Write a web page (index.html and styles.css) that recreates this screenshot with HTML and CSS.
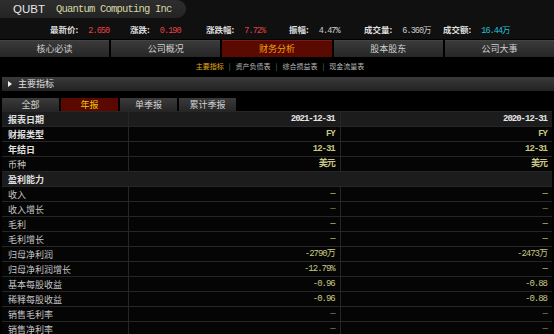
FILE: index.html
```html
<!DOCTYPE html>
<html lang="zh-CN">
<head>
    <meta charset="UTF-8">
    <title>QUBT 财务分析</title>
    <link rel="stylesheet" href="styles.css">
</head>
<body>

    <div class="top">
        <div class="title">
            <span class="code">QUBT</span>
            <span class="name">Quantum Computing Inc</span>
        </div>
        <div class="quote">
            <span class="q"><b>最新价:</b><i class="red">2.650</i></span>
            <span class="q"><b>涨跌:</b><i class="red">0.190</i></span>
            <span class="q"><b>涨跌幅:</b><i class="red">7.72%</i></span>
            <span class="q"><b>振幅:</b><i>4.47%</i></span>
            <span class="q"><b>成交量:</b><i>6.360万</i></span>
            <span class="q"><b>成交额:</b><i class="cyan">16.44万</i></span>
        </div>
    </div>

    <ul class="nav">
        <li>核心必读</li>
        <li>公司概况</li>
        <li class="on">财务分析</li>
        <li>股本股东</li>
        <li>公司大事</li>
    </ul>

    <div class="subnav">
        <a class="on">主要指标</a><span>|</span><a>资产负债表</a><span>|</span><a>综合损益表</a><span>|</span><a>现金流量表</a>
    </div>

    <div class="section"><span class="tri"></span>主要指标</div>

    <ul class="tabs">
        <li>全部</li>
        <li class="on">年报</li>
        <li>单季报</li>
        <li>累计季报</li>
    </ul>

    <table class="data">
        <tr class="head">
            <td>报表日期</td><td>2021-12-31</td><td>2020-12-31</td>
        </tr>
        <tr class="strong">
            <td>财报类型</td><td>FY</td><td>FY</td>
        </tr>
        <tr class="strong">
            <td>年结日</td><td>12-31</td><td>12-31</td>
        </tr>
        <tr class="strong">
            <td class="plain">币种</td><td>美元</td><td>美元</td>
        </tr>
        <tr class="group">
            <td>盈利能力</td><td></td><td></td>
        </tr>
        <tr><td>收入</td><td>—</td><td>—</td></tr>
        <tr class="dim"><td>收入增长</td><td>—</td><td>—</td></tr>
        <tr><td>毛利</td><td>—</td><td>—</td></tr>
        <tr><td>毛利增长</td><td>—</td><td>—</td></tr>
        <tr><td>归母净利润</td><td>-2790万</td><td>-2473万</td></tr>
        <tr><td>归母净利润增长</td><td>-12.79%</td><td>—</td></tr>
        <tr><td>基本每股收益</td><td>-0.96</td><td>-0.88</td></tr>
        <tr><td>稀释每股收益</td><td>-0.96</td><td>-0.88</td></tr>
        <tr class="dim"><td>销售毛利率</td><td>—</td><td>—</td></tr>
        <tr class="dim"><td>销售净利率</td><td>—</td><td>—</td></tr>
    </table>

</body>
</html>
```

FILE: styles.css
```css
body {
    margin: 0;
    background: #000;
    color: #ccc;
    font-family: "Noto Sans CJK SC", sans-serif;
    font-size: 9px;
    overflow: hidden;
}
ul {
    list-style: none;
    margin: 0;
    padding: 0;
}
.top {
    background: #101010;
    height: 39px;
}
.title {
    box-sizing: border-box;
    width: 186px;
    height: 18px;
    padding-left: 13px;
    display: flex;
    align-items: center;
    gap: 11px;
    white-space: nowrap;
    background: linear-gradient(#2e2e2e, #242424);
    border-radius: 0 9px 9px 0;
}
.code {
    color: #e6e6e6;
    font-family: "Liberation Sans", sans-serif;
    font-size: 11.5px;
}
.name {
    color: #d6d6a4;
    font-family: "Liberation Mono", monospace;
    font-size: 10.5px;
    letter-spacing: -0.8px;
}
.quote {
    display: grid;
    grid-template-columns: 80px 76px 83px 75px 79px auto;
    padding: 4px 0 0 50px;
    height: 15px;
    align-items: center;
    white-space: nowrap;
}
.q b {
    color: #ddd;
    font-weight: bold;
    font-size: 8.5px;
    margin-right: 10px;
}
.q i {
    font-style: normal;
    font-family: "Liberation Mono", monospace;
    font-size: 8.5px;
    color: #ccc;
    letter-spacing: -0.9px;
}
.q i.red {
    color: #e84040;
}
.q i.cyan {
    color: #20c0d8;
}
.nav {
    display: flex;
    gap: 2px;
    margin-top: 1px;
}
.nav li {
    flex: 1;
    height: 16px;
    line-height: 16px;
    text-align: center;
    font-size: 9px;
    color: #cfcfcf;
    background: linear-gradient(#3a3a3a, #262626);
    border-top: 1px solid #444;
}
.nav li.on {
    background: #5a0a00;
    border-top-color: #7a1a10;
    color: #f0a010;
}
.subnav {
    text-align: center;
    height: 14px;
    line-height: 14px;
    margin-top: 2px;
    padding-left: 6px;
    font-size: 7px;
    color: #b8b8b8;
}
.subnav span {
    color: #5c9a76;
    margin: 0 5px;
}
.subnav a.on {
    color: #e0a818;
}
.section {
    margin: 4px 0 0 2px;
    height: 14px;
    line-height: 14px;
    padding-left: 16px;
    position: relative;
    background: linear-gradient(#3a3a3a, #222);
    color: #e0e0e0;
}
.tri {
    position: absolute;
    left: 6px;
    top: 4px;
    border-left: 4px solid #eee;
    border-top: 3px solid transparent;
    border-bottom: 3px solid transparent;
}
.tabs {
    display: flex;
    gap: 2px;
    margin: 7px 0 0 2px;
}
.tabs li {
    width: 57px;
    height: 13px;
    line-height: 13px;
    text-align: center;
    color: #d0d0d0;
    background: linear-gradient(#3a3a3a, #262626);
}
.tabs li.on {
    background: #5a0800;
    color: #f0c800;
}
.data {
    margin-left: 2px;
    width: 550px;
    border-collapse: collapse;
    table-layout: fixed;
    background: #050505;
}
.data td {
    height: 14px;
    padding: 0 5px;
    border-top: 1px solid #262626;
    border-bottom: 1px solid #262626;
    color: #c8c884;
    text-align: right;
    font-family: "Liberation Mono", "Noto Sans CJK SC", monospace;
    font-size: 9px;
    letter-spacing: -1px;
    line-height: 13px;
    white-space: nowrap;
}
.data td:first-child {
    width: 115px;
    padding-left: 6px;
    text-align: left;
    color: #c4c4c4;
    font-family: "Noto Sans CJK SC", sans-serif;
    font-size: 9px;
    letter-spacing: 0;
    border-right: 1px solid #262626;
}
.data td:nth-child(2) {
    border-right: 1px solid #262626;
}
.data tr.head td {
    background: #1c1c1c;
    color: #e6e6e6;
    font-weight: bold;
}
.data tr.strong td {
    font-weight: bold;
}
.data tr.strong td:first-child,
.data tr.head td:first-child {
    color: #e0e0e0;
}
.data tr.strong td.plain {
    font-weight: normal;
    color: #c4c4c4;
}
.data tr.group td {
    background: #1c1c1c;
    border-right: 0;
}
.data tr.group td:first-child {
    color: #e0e0e0;
    font-weight: bold;
}
.data tr.dim td {
    color: #8a8a5a;
}
.data tr.dim td:first-child {
    color: #c4c4c4;
}
```
